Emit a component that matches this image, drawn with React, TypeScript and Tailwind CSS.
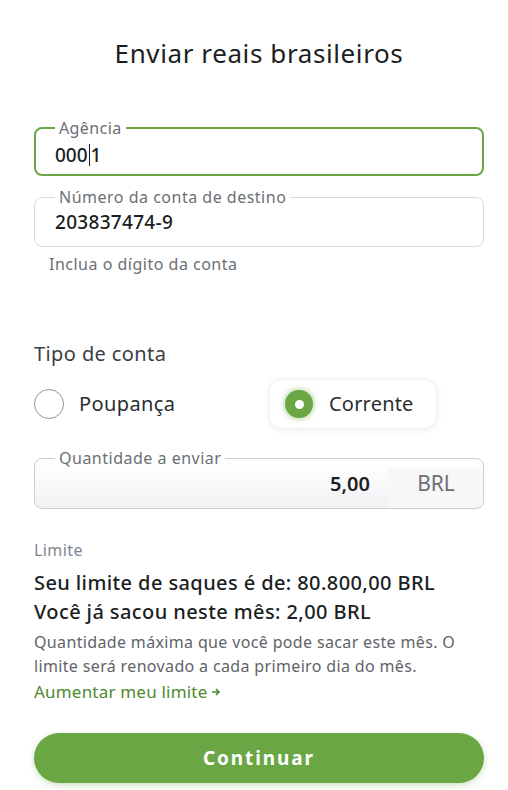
export default function App() {
  return (
    <div className="min-h-[790px] w-[508px] bg-white text-[#1f2328] font-['Noto_Sans','Open_Sans',sans-serif]">
      <div className="pl-[34px] pr-[24px] pt-[36px]">
        <h1 className="text-center text-[26px] leading-[34px] tracking-[0.6px] text-[#1b1e22]">Enviar reais brasileiros</h1>

        <fieldset className="mt-[48px] rounded-lg border-2 border-[#6aa744] px-[19px] pb-[4px]">
          <legend className="px-[4px] text-[16px] leading-[20px] tracking-[0.4px] text-[#6b7075]">Agência</legend>
          <div className="flex h-[32px] items-center pt-[2px] text-[19px] font-medium text-[#1b1e22]">
            <span>000</span>
            <span className="mx-[1px] h-[22px] w-px bg-[#1b1e22]" />
            <span>1</span>
          </div>
        </fieldset>

        <fieldset className="mt-[11px] rounded-lg border border-[#d6dae0] px-[20px] pb-[9px]">
          <legend className="px-[4px] text-[16px] leading-[20px] tracking-[0.5px] text-[#6b7075]">Número da conta de destino</legend>
          <div className="flex h-[30px] items-center pt-[1px] text-[19px] font-medium tracking-[0.3px] text-[#1b1e22]">203837474-9</div>
        </fieldset>

        <p className="mt-[6px] pl-[15px] text-[16px] leading-[22px] tracking-[0.5px] text-[#6b7075]">Inclua o dígito da conta</p>

        <p className="mt-[66px] text-[20px] leading-[26px] tracking-[0.4px] text-[#3a3e43]">Tipo de conta</p>

        <div className="mt-[12px] flex items-center">
          <div className="flex h-[50px] w-[235px] items-center gap-[15px]">
            <span className="h-[30px] w-[30px] rounded-full border-[1.5px] border-[#8f959c] bg-white" />
            <span className="text-[20px] tracking-[0.4px] text-[#2a2e33]">Poupança</span>
          </div>
          <div className="flex h-[50px] w-[168px] items-center gap-[16px] rounded-xl border border-[#f0f1f2] bg-white pl-[15px] shadow-[0_1px_6px_rgba(0,0,0,0.08)]">
            <span className="flex h-[28px] w-[28px] items-center justify-center rounded-full bg-[#6aa744] shadow-[0_0_4px_2px_rgba(106,167,68,0.35)]">
              <span className="h-[9px] w-[9px] rounded-full bg-white" />
            </span>
            <span className="text-[20px] tracking-[0.2px] text-[#2a2e33]">Corrente</span>
          </div>
        </div>

        <fieldset className="mt-[19px] overflow-hidden rounded-lg border border-[#c9ced5] bg-gradient-to-b from-white to-[#f1f2f4] p-0">
          <legend className="ml-[20px] px-[4px] text-[16px] leading-[20px] tracking-[0.5px] text-[#6b7075]">Quantidade a enviar</legend>
          <div className="-mt-[10px] flex h-[50px] items-stretch">
            <div className="flex flex-1 items-center justify-end pr-[19px] pt-[2px] text-[20px] font-semibold text-[#1b1e22]">5,00</div>
            <div className="flex w-[94px] items-center justify-center bg-[#f7f7f8] pt-[2px] text-[21px] text-[#6b7075]">BRL</div>
          </div>
        </fieldset>

        <p className="mt-[30px] text-[16px] leading-[22px] tracking-[0.4px] text-[#7c8791]">Limite</p>
        <p className="mt-[7px] text-[20px] font-medium leading-[29px] tracking-[0.4px] text-[#1b1e22]">Seu limite de saques é de: 80.800,00 BRL</p>
        <p className="text-[20px] font-medium leading-[29px] tracking-[0.4px] text-[#1b1e22]">Você já sacou neste mês: 2,00 BRL</p>
        <p className="mt-[4px] text-[16px] leading-[24px] tracking-[0.35px] text-[#5f646a]">
          Quantidade máxima que você pode sacar este mês. O limite será renovado a cada primeiro dia do mês.
        </p>
        <a className="mt-[2px] flex items-center gap-[4px] text-[17px] leading-[24px] tracking-[0.2px] text-[#4e8a2e]">
          Aumentar meu limite
          <svg width="10" height="10" viewBox="0 0 10 10" fill="none" stroke="currentColor" strokeWidth="1.6">
            <path d="M1 5h7M5 2l3 3-3 3" />
          </svg>
        </a>

        <button className="mt-[29px] flex h-[50px] w-full items-center justify-center rounded-full bg-[#6aa744] text-[19px] font-bold tracking-[0.1em] text-white shadow-[0_2px_6px_rgba(106,167,68,0.35)]">
          Continuar
        </button>
      </div>
    </div>
  );
}
